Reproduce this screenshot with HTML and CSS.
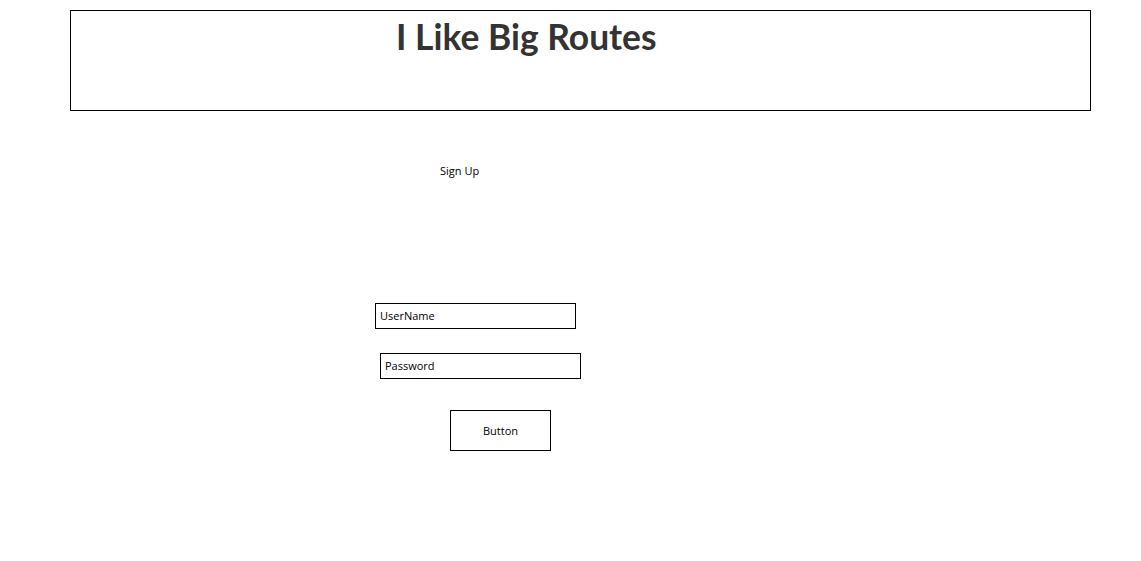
FILE: index.html
```html
<!DOCTYPE html>
<html>

<head>
  <title>I Like Big Routes</title>
  <meta charset="UTF-8">
  <meta name="viewport" content="width=device-width,initial-scale=1.0">
  <link rel="stylesheet" href="styles.css">
</head>

<body>
  <div class="header">
    <h1 class="title">I Like Big Routes</h1>
  </div>

  <div class="signup">
    <p class="signup_label">Sign Up</p>
    <div class="field field_user">UserName</div>
    <div class="field field_pass">Password</div>
    <div class="button">Button</div>
  </div>
</body>

</html>
```

FILE: styles.css
```css
html,
body {
  margin: 0;
  padding: 0;
  background-color: white;
  font-family: "Open Sans", "Noto Sans", sans-serif;
  color: black;
}

.header {
  margin: 10px 0 0 70px;
  width: 1021px;
  height: 101px;
  border: 1px solid black;
  box-sizing: border-box;
}

.title {
  margin: 0;
  padding: 8px 0 0 325px;
  font-family: Lato, "Open Sans", sans-serif;
  font-size: 35.4px;
  font-weight: 700;
  line-height: 1;
  color: #333333;
}

.signup {
  display: flex;
  flex-direction: column;
  align-items: flex-start;
}

.signup_label {
  margin: 52px 0 0 440px;
  font-size: 11px;
  line-height: 16px;
}

.field {
  width: 201px;
  height: 26px;
  border: 1px solid black;
  box-sizing: border-box;
  padding: 0 4px;
  font-size: 11px;
  line-height: 24px;
}

.field_user {
  margin: 124px 0 0 375px;
}

.field_pass {
  margin: 24px 0 0 380px;
}

.button {
  margin: 31px 0 0 450px;
  width: 101px;
  height: 41px;
  border: 1px solid black;
  box-sizing: border-box;
  display: grid;
  place-content: center;
  font-size: 11px;
}
```
